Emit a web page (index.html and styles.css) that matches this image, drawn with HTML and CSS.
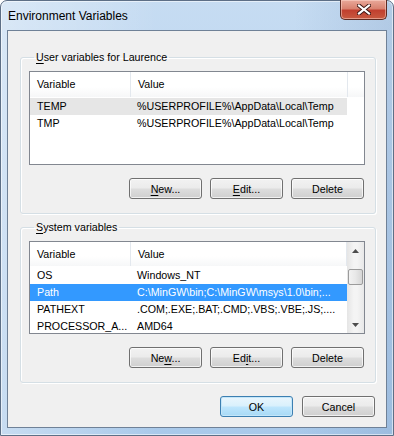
FILE: index.html
```html
<!DOCTYPE html>
<html lang="en">
<head>
  <meta charset="UTF-8" />
  <title>Environment Variables</title>
  <link rel="stylesheet" href="styles.css">
</head>
<body>
  <div class="window">
    <div class="titlebar">
      <span class="title">Environment Variables</span>
      <button class="close" title="Close">
        <svg width="14" height="11" viewBox="0 0 14 11">
          <path d="M2 1.5 L12 9.5 M12 1.5 L2 9.5" stroke="#3a1410" stroke-width="4" stroke-linecap="square" />
          <path d="M2 1.5 L12 9.5 M12 1.5 L2 9.5" stroke="#ffffff" stroke-width="2.2" stroke-linecap="square" />
        </svg>
      </button>
    </div>

    <div class="client">
      <fieldset class="group">
        <legend><u>U</u>ser variables for Laurence</legend>
        <div class="listview user-list">
          <div class="list-body">
            <div class="list-row list-head">
              <span>Variable</span><span>Value</span><span></span>
            </div>
            <div class="list-row inactive-sel">
              <span>TEMP</span><span>%USERPROFILE%\AppData\Local\Temp</span>
            </div>
            <div class="list-row">
              <span>TMP</span><span>%USERPROFILE%\AppData\Local\Temp</span>
            </div>
          </div>
        </div>
        <div class="buttons">
          <button class="btn"><u>N</u>ew...</button>
          <button class="btn"><u>E</u>dit...</button>
          <button class="btn">Delete</button>
        </div>
      </fieldset>

      <fieldset class="group system">
        <legend><u>S</u>ystem variables</legend>
        <div class="listview sys-list">
          <div class="list-body">
            <div class="list-row list-head">
              <span>Variable</span><span>Value</span>
            </div>
            <div class="list-row">
              <span>OS</span><span>Windows_NT</span>
            </div>
            <div class="list-row selected">
              <span>Path</span><span>C:\MinGW\bin;C:\MinGW\msys\1.0\bin;...</span>
            </div>
            <div class="list-row">
              <span>PATHEXT</span><span>.COM;.EXE;.BAT;.CMD;.VBS;.VBE;.JS;....</span>
            </div>
            <div class="list-row">
              <span>PROCESSOR_A...</span><span>AMD64</span>
            </div>
          </div>
          <div class="scrollbar">
            <div class="sb-arrow"><svg width="7" height="4" viewBox="0 0 7 4"><path d="M0 4 L3.5 0 L7 4 Z" fill="#4d4d4d"/></svg></div>
            <div class="sb-track">
              <div class="sb-thumb"></div>
            </div>
            <div class="sb-arrow"><svg width="7" height="4" viewBox="0 0 7 4"><path d="M0 0 L3.5 4 L7 0 Z" fill="#4d4d4d"/></svg></div>
          </div>
        </div>
        <div class="buttons">
          <button class="btn">Ne<u>w</u>...</button>
          <button class="btn">Ed<u>i</u>t...</button>
          <button class="btn">Delete</button>
        </div>
      </fieldset>

      <div class="dialog-buttons">
        <button class="btn default">OK</button>
        <button class="btn">Cancel</button>
      </div>
    </div>
  </div>
</body>
</html>
```

FILE: styles.css
```css
body {
  margin: 0;
  width: 394px;
  height: 436px;
  overflow: hidden;
  font-family: 'Liberation Sans', Arial, sans-serif;
  font-size: 10.7px;
  color: #000;
  background: #fff;
}

.window {
  box-sizing: border-box;
  width: 394px;
  height: 436px;
  display: flex;
  flex-direction: column;
  border: 1px solid #5d6f86;
  border-radius: 7px 7px 0 0;
  background:
    linear-gradient(90deg, rgba(255,255,255,0.35) 0, rgba(255,255,255,0) 40%, rgba(255,255,255,0) 75%, rgba(120,150,190,0.25) 100%),
    linear-gradient(180deg, #c6dcf2 0%, #bad4ef 40%, #a9c9ea 100%);
  box-shadow: inset 0 0 0 1px rgba(255,255,255,0.55);
}

/* barra de titulo */
.titlebar {
  height: 29px;
  display: flex;
  align-items: flex-start;
  padding-left: 7px;
}

.title {
  font-size: 12px;
  line-height: 30px;
  color: #000;
}

.close {
  margin-left: auto;
  margin-right: 6px;
  margin-top: -1px;
  width: 47px;
  height: 20px;
  padding: 0;
  display: flex;
  align-items: center;
  justify-content: center;
  border: 1px solid #5e2a22;
  border-top: none;
  border-radius: 0 0 5px 5px;
  background: linear-gradient(180deg, #e9a99a 0%, #d98270 45%, #c1402f 55%, #c85a40 100%);
  box-shadow: inset 0 0 0 1px rgba(255,220,210,0.5);
}

/* area de contenido */
.client {
  flex: 1;
  margin: 0 6px 7px 6px;
  border: 1px solid #6f8197;
  background: #f0f0f0;
  display: flex;
  flex-direction: column;
  padding: 0 10px 10px 12px;
}

.group {
  margin: 18px 0 0 0;
  padding: 6px 10px 14px 8px;
  border: 1px solid #d5dfe5;
  border-radius: 3px;
  box-shadow: inset 1px 1px 0 #fff, 1px 1px 0 #fff;
  min-width: 0;
}

.group.system {
  margin-top: 5px;
  padding-top: 6px;
}

.group legend {
  margin-left: 5px;
  padding: 0 2px;
  line-height: 16px;
}

u {
  text-decoration: underline;
  text-underline-offset: 2px;
}

.listview {
  display: flex;
  background: #fff;
  border: 1px solid #828790;
}

.user-list {
  height: 92px;
}

.sys-list {
  height: 91px;
}

.list-body {
  flex: 1;
  min-width: 0;
}

.list-row {
  display: grid;
  grid-template-columns: 100px 217px 1fr;
  height: 17px;
  line-height: 17px;
  white-space: nowrap;
}

.list-row span {
  padding-left: 7px;
  overflow: hidden;
}

.list-head {
  height: 25px;
  line-height: 25px;
  margin-bottom: 1px;
  background: linear-gradient(180deg, #ffffff 0%, #ffffff 60%, #f6f7f8 100%);
}

.sys-list .list-head {
  height: 24px;
  line-height: 24px;
}

.list-head span + span {
  border-left: 1px solid #e3e8ee;
}

.list-head span:last-child {
  border-right: 1px solid #e3e8ee;
}

.user-list .list-head span:last-child {
  border-right: none;
}

.inactive-sel span:nth-child(-n+2) {
  background: #e6e6e6;
}

.selected span:nth-child(-n+2) {
  background: #3399ff;
  color: #fff;
}

/* barra de desplazamiento */
.scrollbar {
  width: 17px;
  display: flex;
  flex-direction: column;
  background: linear-gradient(90deg, #e5e5e5 0%, #f4f4f4 40%, #f4f4f4 60%, #e8e8e8 100%);
}

.sb-arrow {
  height: 17px;
  display: flex;
  align-items: center;
  justify-content: center;
}

.sb-track {
  flex: 1;
  padding-top: 10px;
}

.sb-thumb {
  box-sizing: border-box;
  height: 16px;
  margin: 0 1px;
  border: 1px solid #9b9b9b;
  border-radius: 2px;
  background: linear-gradient(90deg, #f2f2f2 0%, #e8e8e8 50%, #d6d6d6 100%);
}

/* botones */
.buttons {
  display: flex;
  justify-content: flex-end;
  gap: 8px;
  margin: 13px 1px 0 0;
}

.btn {
  box-sizing: border-box;
  width: 73px;
  height: 21px;
  padding: 0;
  font: inherit;
  color: #000;
  border: 1px solid #707070;
  border-radius: 3px;
  background: linear-gradient(180deg, #f2f2f2 0%, #ebebeb 48%, #dddddd 52%, #cfcfcf 100%);
  box-shadow: inset 0 0 0 1px rgba(255,255,255,0.7);
}

.btn.default {
  border-color: #3c7fb1;
  background: linear-gradient(180deg, #eaf6fd 0%, #d9f0fc 48%, #bee6fd 52%, #a7d9f5 100%);
  box-shadow: inset 0 0 0 1px #c4e6f9;
}

.dialog-buttons {
  display: flex;
  justify-content: flex-end;
  gap: 9px;
  margin-top: auto;
  margin-right: 1px;
}
```
